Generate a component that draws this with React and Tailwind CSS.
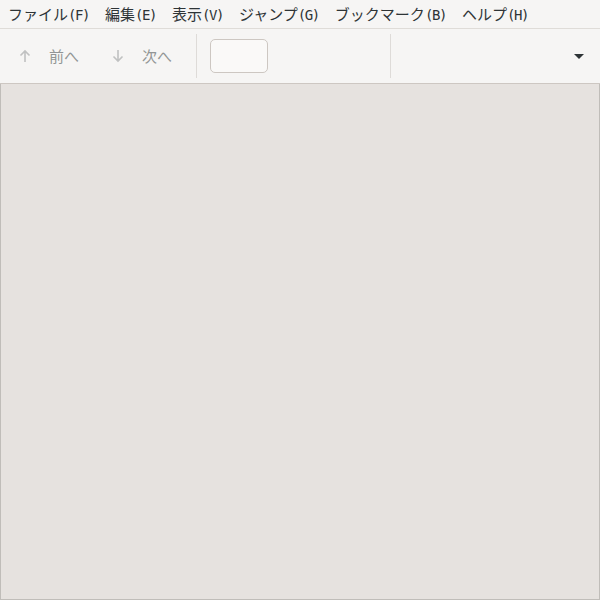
const menus = [
  ['ファイル', 'F'],
  ['編集', 'E'],
  ['表示', 'V'],
  ['ジャンプ', 'G'],
  ['ブックマーク', 'B'],
  ['ヘルプ', 'H'],
];

const Arrow = ({ down }) => (
  <svg width="16" height="16" viewBox="0 0 16 16" className={down ? 'rotate-180' : ''}>
    <path d="M8 3v11M3.5 7.5L8 3l4.5 4.5" fill="none" stroke="#c0c1c1" strokeWidth="1.6" />
  </svg>
);

export default function App() {
  return (
    <div className="w-[600px] h-[600px] flex flex-col bg-[#f6f5f4] text-[#2e3436] font-['Noto_Sans_CJK_JP',sans-serif]">
      {/* menu bar */}
      <div className="h-[29px] flex items-center border-b border-[#dfdcd8] text-[15px]">
        {menus.map(([label, key]) => (
          <span key={key} className="px-2 leading-none whitespace-nowrap">
            {label}
            <span className="font-['DejaVu_Sans_Mono',monospace] text-[14px] tracking-[-1.43px]">({key})</span>
          </span>
        ))}
      </div>

      {/* toolbar */}
      <div className="h-[55px] flex items-center border-b border-[#cdc7c2] text-[15px] text-[#929595]">
        <div className="flex items-center pl-[17px]">
          <Arrow />
          <span className="ml-4">前へ</span>
        </div>
        <div className="flex items-center ml-[31px]">
          <Arrow down />
          <span className="ml-4">次へ</span>
        </div>
        <div className="ml-6 w-px h-[44px] bg-[#dedbd8]" />
        <div className="ml-[13px] w-[58px] h-[34px] rounded-[5px] border border-[#cdc7c2] bg-[#faf9f8]" />
        <div className="ml-[122px] w-px h-[44px] bg-[#dedbd8]" />
        <div className="flex-1" />
        <svg width="10" height="6" viewBox="0 0 10 6" className="mr-4 mt-[2px]">
          <path d="M0 0h10L5 5z" fill="#2e3436" />
        </svg>
      </div>

      {/* document area */}
      <div className="flex-1 bg-[#e6e2df] border-x border-b border-[#c0bdb9]" />
    </div>
  );
}
